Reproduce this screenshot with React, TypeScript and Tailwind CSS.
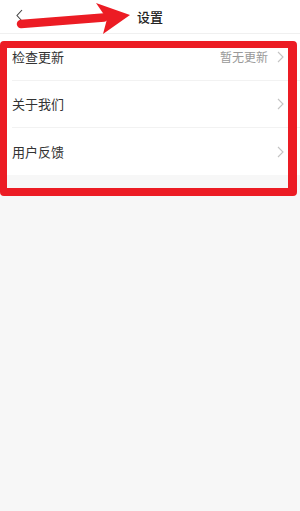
import React from 'react';

const rows = [
  { label: '检查更新', value: '暂无更新' },
  { label: '关于我们', value: '' },
  { label: '用户反馈', value: '' },
];

function ChevronRight() {
  return (
    <svg width="7" height="12" viewBox="0 0 7 12" fill="none">
      <path d="M1 1l5 5-5 5" stroke="#c4c4c4" strokeWidth="1.1" />
    </svg>
  );
}

export default function App() {
  return (
    <div
      className="relative w-[300px] h-[511px] bg-[#f7f7f7] overflow-hidden"
      style={{ fontFamily: '"Noto Sans CJK SC", "Noto Sans", sans-serif' }}
    >
      {/* Header */}
      <div className="h-[34px] bg-white border-b border-[#f0f0f0] flex items-center justify-center relative">
        <svg className="absolute left-[15px] top-[9px]" width="9" height="13" viewBox="0 0 9 13" fill="none">
          <path d="M7 1L2 6.5 7 12" stroke="#444" strokeWidth="1.1" />
        </svg>
        <span className="text-[13px] text-[#222] font-medium leading-none">设置</span>
      </div>

      {/* List */}
      <div className="bg-white">
        {rows.map((row, i) => (
          <div key={row.label} className="pl-3">
            <div
              className={`h-[47px] flex items-center justify-between pr-[16px] ${
                i < rows.length - 1 ? 'border-b border-[#f2f2f2]' : ''
              }`}
            >
              <span className="text-[13px] text-[#333]">{row.label}</span>
              <div className="flex items-center gap-[9px]">
                {row.value && <span className="text-[12px] text-[#999]">{row.value}</span>}
                <ChevronRight />
              </div>
            </div>
          </div>
        ))}
      </div>

      {/* Annotation box */}
      <div className="absolute left-0 top-[41px] w-[297px] h-[155px] border-[7px] border-r-[9px] border-b-[8px] border-[#ec1c24] rounded-[4px]" />

      {/* Annotation arrow */}
      <svg className="absolute left-0 top-0" width="140" height="38" viewBox="0 0 140 38">
        <path d="M21 24 L104 17.5" stroke="#ec1c24" strokeWidth="8.5" strokeLinecap="round" />
        <polygon points="96,3 130,15 103,34 107,19" fill="#ec1c24" />
      </svg>
    </div>
  );
}
